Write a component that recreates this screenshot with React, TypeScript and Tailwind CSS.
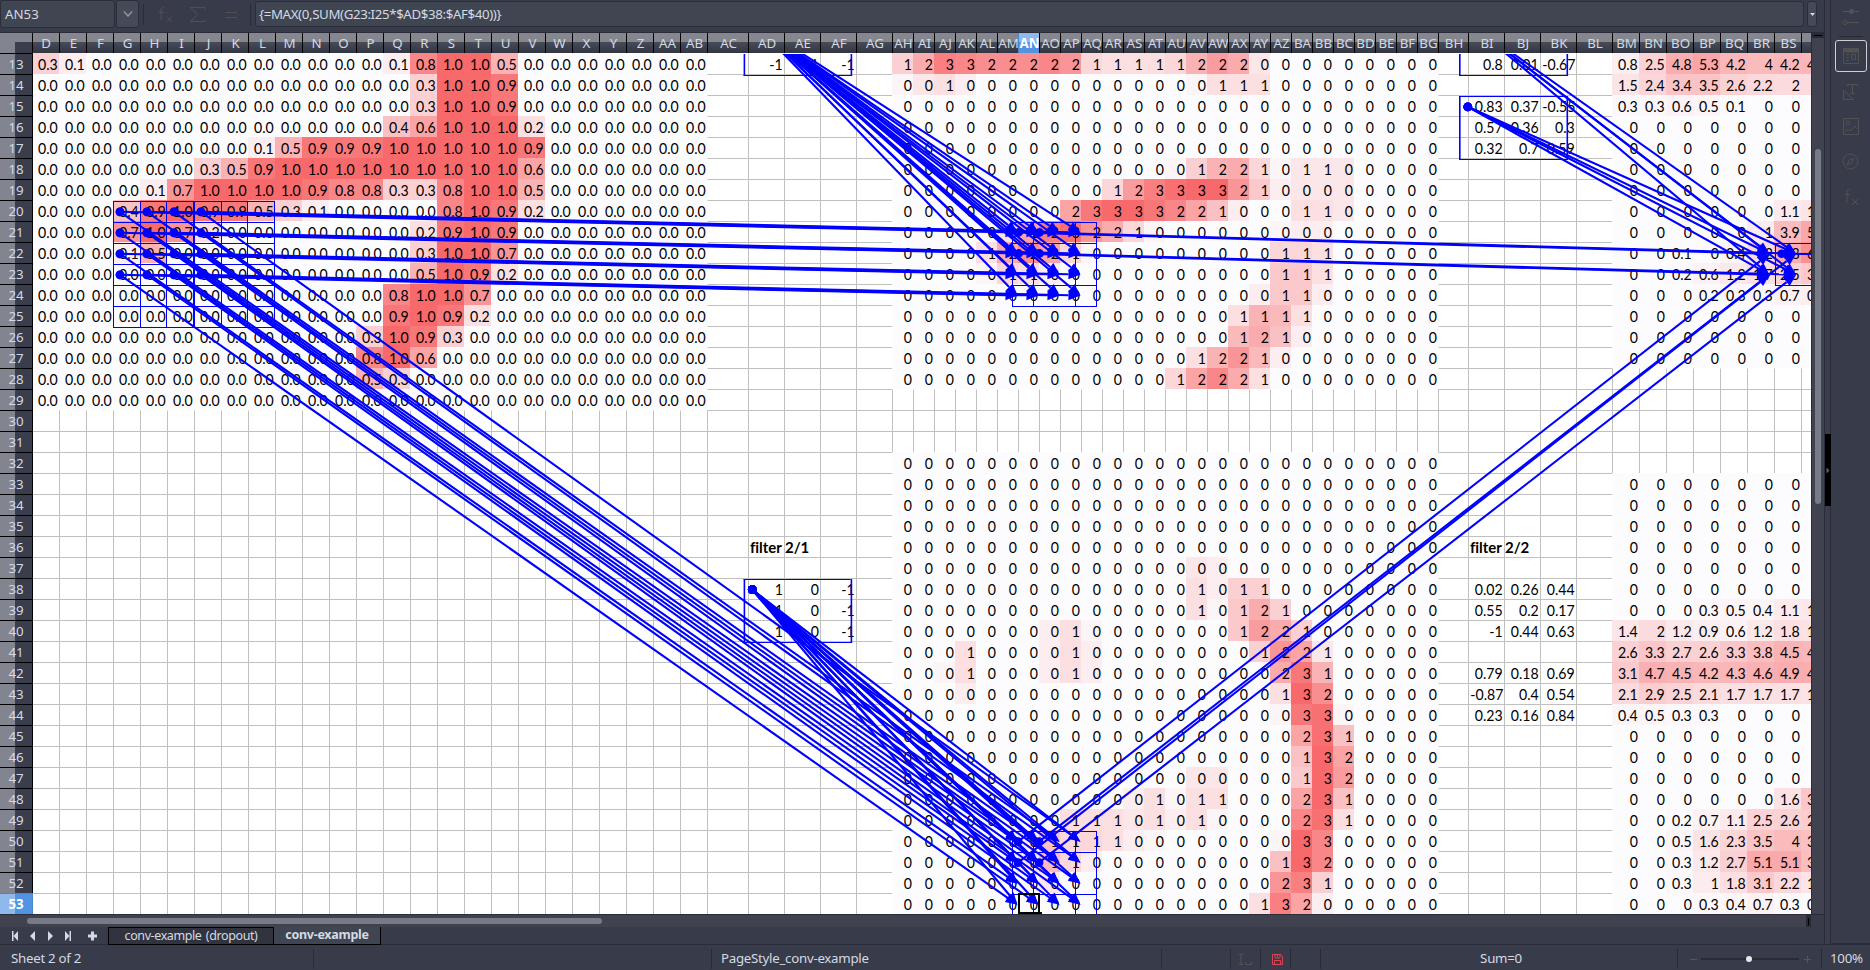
import React from "react";

const UI = "font-['Noto_Sans',sans-serif]";
const FIRST_ROW = 13;
const LAST_ROW = 53;

type Col = { name: string; w: number };

function colName(n: number): string {
  let s = "";
  let k = n;
  while (k > 0) {
    s = String.fromCharCode(65 + ((k - 1) % 26)) + s;
    k = Math.floor((k - 1) / 26);
  }
  return s;
}

function colNumber(name: string): number {
  return name.split("").reduce((n, c) => n * 26 + c.charCodeAt(0) - 64, 0);
}

const D = 4;
const AC = colNumber("AC");
const AH = colNumber("AH");
const BH = colNumber("BH");
const BM = colNumber("BM");
const BT = colNumber("BT");

const cols: Col[] = [];
for (let n = D; n <= BT; n++) {
  let w = 27;
  if (n === AC) w = 41;
  else if (n > AC && n < AH) w = 36;
  else if (n >= AH && n < BH) w = 21;
  else if (n === BH) w = 30;
  else if (n > BH && n < BM) w = 36;
  else if (n === BT) w = 10;
  cols.push({ name: colName(n), w });
}

/* Non-zero pixels of the input image, in tenths. */
const imageCells: Record<number, Record<string, number>> = {
  13: { D: 3, E: 1, Q: 1, R: 8, S: 10, T: 10, U: 5 },
  14: { R: 3, S: 10, T: 10, U: 9 },
  15: { R: 3, S: 10, T: 10, U: 9 },
  16: { Q: 4, R: 6, S: 10, T: 10, U: 10, V: 2 },
  17: { L: 1, M: 5, N: 9, O: 9, P: 9, Q: 10, R: 10, S: 10, T: 10, U: 10, V: 9 },
  18: { J: 3, K: 5, L: 9, M: 10, N: 10, O: 10, P: 10, Q: 10, R: 10, S: 10, T: 10, U: 10, V: 6 },
  19: { H: 1, I: 7, J: 10, K: 10, L: 10, M: 10, N: 9, O: 8, P: 8, Q: 3, R: 3, S: 8, T: 10, U: 10, V: 5 },
  20: { G: 4, H: 9, I: 10, J: 9, K: 9, L: 5, M: 3, N: 1, S: 8, T: 10, U: 9, V: 2 },
  21: { G: 7, H: 10, I: 7, J: 2, R: 2, S: 9, T: 10, U: 9 },
  22: { G: 1, H: 5, R: 3, S: 10, T: 10, U: 7 },
  23: { R: 5, S: 10, T: 9, U: 2 },
  24: { Q: 8, R: 10, S: 10, T: 7 },
  25: { Q: 9, R: 10, S: 9, T: 2 },
  26: { P: 3, Q: 10, R: 9, S: 3 },
  27: { P: 8, Q: 10, R: 6 },
  28: { P: 5, Q: 3 },
};

/* Sparse feature map rows: "column:digit:heat", heat in twentieths. */
const maps: Record<number, string> = {
  13: "AH:1:6 AI:2:11 AJ:3:17 AK:3:16 AL:2:15 AM:2:15 AN:2:15 AO:2:16 AP:2:14 AQ:1:5 AR:1:4 AS:1:4 AT:1:4 AU:1:5 AV:2:10 AW:2:13 AX:2:11 AY:0:3",
  14: "AH:0:1 AI:0:3 AJ:1:4 AK:0:2 AV:0:1 AW:1:4 AX:1:4 AY:1:4",
  18: "AU:0:1 AV:1:6 AW:2:10 AX:2:11 AY:1:5 AZ:0:1 BA:1:3 BB:1:3 BC:0:3",
  19: "AR:1:5 AS:2:13 AT:3:17 AU:3:19 AV:3:20 AW:3:20 AX:2:14 AY:1:7 AZ:0:2 BA:0:3 BB:0:3 BC:0:3",
  20: "AP:2:12 AQ:3:18 AR:3:20 AS:3:20 AT:3:18 AU:2:16 AV:2:12 AW:1:8 AX:0:2 BA:1:4 BB:1:4 BC:0:3",
  21: "AM:0:4 AN:1:12 AO:2:17 AP:3:19 AQ:2:14 AR:2:11 AS:1:5 AT:0:1 AZ:0:1 BA:0:2 BB:0:2",
  22: "AL:1:4 AM:2:11 AN:2:15 AO:2:12 AP:1:5 AQ:0:1 AZ:1:5 BA:1:5 BB:1:4",
  23: "AL:0:1 AM:1:5 AN:1:4 AO:0:2 AP:0:0 AZ:1:7 BA:1:7 BB:1:4",
  24: "AY:0:2 AZ:1:7 BA:1:7 BB:0:2",
  25: "AX:1:4 AY:1:10 AZ:1:9 BA:1:4",
  26: "AX:1:9 AY:2:11 AZ:1:8 BA:0:2",
  27: "AV:1:4 AW:2:10 AX:2:14 AY:1:9 AZ:0:2",
  28: "AU:1:5 AV:2:12 AW:2:16 AX:2:11 AY:1:4",
  37: "AV:0:3 AW:0:2",
  38: "AV:1:4 AW:0:2 AX:1:6 AY:1:6",
  39: "AV:1:4 AW:0:1 AX:1:7 AY:2:11 AZ:1:6",
  40: "AO:0:2 AP:1:4 AQ:0:1 AX:1:7 AY:2:13 AZ:2:11 BA:1:6",
  41: "AK:1:4 AO:0:2 AP:1:4 AQ:0:2 AY:1:6 AZ:2:14 BA:2:12 BB:1:3",
  42: "AJ:0:1 AK:1:4 AO:0:2 AP:1:4 AQ:0:2 AZ:2:11 BA:3:18 BB:1:10",
  43: "AK:0:2 AZ:1:4 BA:3:20 BB:2:15",
  44: "AZ:0:1 BA:3:18 BB:3:19 BC:0:1",
  45: "BA:2:12 BB:3:19 BC:1:8",
  46: "BA:1:8 BB:3:20 BC:2:12",
  47: "AV:0:3 AW:0:3 BA:1:7 BB:3:20 BC:2:13",
  48: "AS:0:2 AT:1:4 AU:0:1 AV:1:4 AW:1:4 BA:2:12 BB:3:20 BC:1:8",
  49: "AP:1:4 AQ:1:4 AR:1:4 AS:0:3 AT:1:4 AU:0:2 AV:1:4 AW:0:1 BA:2:16 BB:3:19 BC:1:4",
  50: "AN:0:2 AO:1:8 AP:1:5 AQ:1:5 AR:1:4 AS:0:2 AT:0:1 AZ:0:1 BA:3:20 BB:3:16",
  51: "AN:0:3 AO:1:9 AP:1:5 AQ:0:2 AZ:1:8 BA:3:20 BB:2:16",
  52: "AO:0:3 AZ:2:14 BA:3:17 BB:1:6",
  53: "AY:1:4 AZ:3:17 BA:2:12 BB:0:2",
};

const output: Record<number, string> = {
  13: "0.8 2.5 4.8 5.3 4.2 4 4.2 4.3",
  14: "1.5 2.4 3.4 3.5 2.6 2.2 2 2",
  15: "0.3 0.3 0.6 0.5 0.1 0 0 0",
  20: "0 0 0 0 0 0 1.1 1.4",
  21: "0 0 0 0 0 1 3.9 5.2",
  22: "0 0 0.1 0 0.4 2 4.8 6.6",
  23: "0 0 0.2 0.6 1.2 1.7 2.5 3.1",
  24: "0 0 0 0.2 0.3 0.3 0.7 0.8",
  39: "0 0 0 0.3 0.5 0.4 1.1 1.2",
  40: "1.4 2 1.2 0.9 0.6 1.2 1.8 1.6",
  41: "2.6 3.3 2.7 2.6 3.3 3.8 4.5 4.2",
  42: "3.1 4.7 4.5 4.2 4.3 4.6 4.9 4.8",
  43: "2.1 2.9 2.5 2.1 1.7 1.7 1.7 1.6",
  44: "0.4 0.5 0.3 0.3 0 0 0 0",
  48: "0 0 0 0 0 0 1.6 3.3",
  49: "0 0 0.2 0.7 1.1 2.5 2.6 2.9",
  50: "0 0 0.5 1.6 2.3 3.5 4 3.7",
  51: "0 0 0.3 1.2 2.7 5.1 5.1 3.8",
  52: "0 0 0.3 1 1.8 3.1 2.2 1.4",
  53: "0 0 0 0.3 0.4 0.7 0.3 0.2",
};

const filters: Record<number, Record<string, string>> = {
  13: { AD: "-1", AE: "-1", AF: "-1", BI: "0.8", BJ: "0.01", BK: "-0.67" },
  15: { BI: "0.83", BJ: "0.37", BK: "-0.55" },
  16: { BI: "0.57", BJ: "0.36", BK: "0.3" },
  17: { BI: "0.32", BJ: "0.7", BK: "0.59" },
  38: { AD: "1", AE: "0", AF: "-1", BI: "0.02", BJ: "0.26", BK: "0.44" },
  39: { AD: "1", AE: "0", AF: "-1", BI: "0.55", BJ: "0.2", BK: "0.17" },
  40: { AD: "1", AE: "0", AF: "-1", BI: "-1", BJ: "0.44", BK: "0.63" },
  42: { BI: "0.79", BJ: "0.18", BK: "0.69" },
  43: { BI: "-0.87", BJ: "0.4", BK: "0.54" },
  44: { BI: "0.23", BJ: "0.16", BK: "0.84" },
};

function heat(t: number): string {
  const f = Math.min(1, Math.max(0, t));
  const mix = (a: number, b: number) => Math.round(a + (b - a) * f);
  return `rgb(${mix(252, 248)},${mix(252, 105)},${mix(255, 107)})`;
}

type CellData = { text?: string; bg?: string; label?: boolean };

function cellAt(row: number, i: number): CellData {
  const n = D + i;
  const name = cols[i].name;
  if (n < AC && row <= 29) {
    const v = (imageCells[row]?.[name] ?? 0) / 10;
    return { text: v.toFixed(1), bg: heat(v) };
  }
  if (n >= AH && n < BH && (row <= 28 || row >= 32)) {
    const hit = (maps[row] ?? "").split(" ").find((t) => t.startsWith(name + ":"));
    if (!hit) return { text: "0", bg: heat(0) };
    const [, text, level] = hit.split(":");
    return { text, bg: heat(Number(level) / 20) };
  }
  if (n >= BM && (row <= 27 || row >= 33)) {
    const text = (output[row] ?? "").split(" ")[n - BM] || "0";
    /* Single digits of the last, partly scrolled column lie beyond the edge. */
    const hidden = n === BT && text.length === 1;
    return { text: hidden ? "" : text, bg: heat(Number(text) / 9) };
  }
  if (row === 36 && name === "AD") return { text: "filter 2/1", label: true };
  if (row === 36 && name === "BI") return { text: "filter 2/2", label: true };
  return { text: filters[row]?.[name] };
}

function Num({ children }: { children?: string }) {
  if (!children) return null;
  return <span className="inline-block origin-right scale-x-[0.91] whitespace-nowrap [font-kerning:none]">{children}</span>;
}

function Cell({ row, i }: { row: number; i: number }) {
  const { text, bg, label } = cellAt(row, i);
  const { w, name } = cols[i];
  const n = D + i;
  if (bg) {
    return (
      <div className="h-[21px] shrink-0 overflow-hidden" style={{ width: w, backgroundColor: bg }}>
        <div className="flex justify-end pr-px pt-px leading-[21px]" style={{ width: n === BT ? 27 : w }}>
          <Num>{text}</Num>
        </div>
      </div>
    );
  }
  const above = row > FIRST_ROW && cellAt(row - 1, i).bg;
  const left = (name === "AC" && row <= 29) || (name === "BH" && (row <= 28 || row >= 32));
  return (
    <div
      className={`flex h-[21px] shrink-0 whitespace-nowrap border-l border-t leading-[21px] ${
        above || row === FIRST_ROW ? "border-t-transparent" : "border-t-[#c0c0c0]"
      } ${left ? "border-l-[#fcfcff]" : "border-l-[#c0c0c0]"} ${
        label ? "justify-start pl-px text-[15px] font-bold tracking-[-0.05px]" : "justify-end pr-px"
      }`}
      style={{ width: w }}
    >
      {label ? text : <Num>{text}</Num>}
    </div>
  );
}

function HeaderRow() {
  return (
    <div className="flex h-[20px] shrink-0 border-b border-black">
      <div className="flex h-[20px] w-[33px] shrink-0 flex-col items-end border-r border-black bg-[#82858f] pt-[9px]">
        <div className="h-[11px] w-[17px] bg-[#3a3d4b]" />
      </div>
      {cols.map((c, i) => {
        const sel = c.name === "AN";
        const w = i === 0 ? c.w - 1 : c.w;
        return (
          <div
            key={c.name}
            className={`h-[20px] shrink-0 overflow-hidden text-center text-[13.3px] leading-[21px] ${UI} ${
              i === 0 ? "" : sel ? "border-l border-[#4a86cf]" : "border-l border-black"
            } ${
              sel
                ? "bg-[linear-gradient(#8fb8ed_0,#8fb8ed_9px,#5294e2_9px)] font-bold text-white"
                : "bg-[linear-gradient(#85868e_0,#85868e_9px,#484b58_9px,#323542)] text-[#d3dae3]"
            }`}
            style={{ width: w }}
          >
            <div className="flex justify-center" style={{ width: w }}>
              <span>{c.name === "BT" ? "" : c.name}</span>
            </div>
          </div>
        );
      })}
    </div>
  );
}

type P = [number, number];

function Arrow({ from, to }: { from: P; to: P }) {
  const dx = to[0] - from[0];
  const dy = to[1] - from[1];
  const len = Math.hypot(dx, dy);
  const ux = dx / len;
  const uy = dy / len;
  const bx = to[0] - ux * 12;
  const by = to[1] - uy * 12;
  return (
    <g>
      <line x1={from[0]} y1={from[1]} x2={bx} y2={by} stroke="#0000ff" strokeWidth={2.1} />
      <polygon
        points={`${to[0]},${to[1]} ${bx - uy * 5},${by + ux * 5} ${bx + uy * 5},${by - ux * 5}`}
        fill="#0000ff"
      />
      <circle cx={from[0]} cy={from[1]} r={4.4} fill="#0000ff" />
    </g>
  );
}

function Box({ x, y, w, h, thick }: { x: number; y: number; w: number; h: number; thick?: boolean }) {
  return (
    <g fill="#0000ff">
      <rect x={x} y={y} width={w} height={1} />
      <rect x={x} y={y + h} width={w + 1} height={1} />
      <rect x={x} y={y} width={thick ? 1.6 : 1} height={h + 1} />
      <rect x={x + w} y={y} width={thick ? 1.6 : 1} height={h + 1} />
    </g>
  );
}

/* Precedent tracing in window coordinates; the sheet's cells begin at y = 53. */
function Detective() {
  const four = [0, 1, 2, 3];
  const two = [0, 1];
  const arrows: { from: P; to: P }[] = [];
  const boxes: React.ReactNode[] = [];
  for (const i of four)
    for (const j of four) {
      const src: P = [120 + 27 * i, 211.8 + 21 * j];
      const a: P = [1017.5 + 21 * i, 232.6 + 21 * j];
      const b: P = [1017.5 + 21 * i, 841.7 + 21 * j];
      arrows.push({ from: src, to: a }, { from: src, to: b });
      arrows.push({ from: [752.3, 21.5], to: a }, { from: [752.3, 589.7], to: b });
      boxes.push(<Box key={`s${i}${j}`} x={113 + 27 * i - (i > 1 ? 1 : 0)} y={201 + 21 * j} w={81} h={63} />);
    }
  for (const i of two)
    for (const j of two) {
      const t: P = [1769.5 + 26.6 * i, 253.7 + 21 * j];
      arrows.push({ from: [1018.5 + 21 * i, 232.5 + 21 * j], to: t });
      arrows.push({ from: [1018 + 21 * i, 841.7 + 21 * j], to: t });
      arrows.push({ from: [1467.8, 21.5], to: t }, { from: [1467.8, 106.8], to: t });
      boxes.push(<Box key={`a${i}${j}`} x={1012 + 21 * i} y={222 + 21 * j} w={63} h={63} />);
      boxes.push(<Box key={`b${i}${j}`} x={1012 + 21 * i} y={831 + 21 * j} w={63} h={63} />);
    }
  return (
    <svg className="pointer-events-none absolute left-0 top-[54px]" width={1811} height={860} viewBox="0 54 1811 860">
      {boxes}
      <Box x={743.6} y={12} w={107} h={63} thick />
      <Box x={743.6} y={579} w={107} h={63} thick />
      <Box x={1459} y={12} w={107.5} h={63} thick />
      <Box x={1459} y={96} w={107.5} h={63} thick />
      <Box x={1775} y={243} w={60} h={42} />
      {arrows.map((a, k) => (
        <Arrow key={k} from={a.from} to={a.to} />
      ))}
      <circle cx={1781.5} cy={253.7} r={4.2} fill="#0000ff" />
      <line x1={1781} y1={253.7} x2={1811} y2={254} stroke="#0000ff" strokeWidth={2} />
      <rect x={1019} y={894} width={20} height={19} fill="none" stroke="#000" strokeWidth={2} />
      <rect x={1037} y={912} width={5} height={2} fill="#000" />
    </svg>
  );
}

function Sidebar() {
  return (
    <div className="flex h-[944px] w-[46px] shrink-0">
      <div className="flex w-[7px] flex-col items-center justify-start border-x border-[#2a2d39] bg-[#3a3d4b] pt-[434px]">
        <div className="flex h-[72px] w-[6px] items-center justify-center bg-black">
          <svg width="4" height="7" viewBox="0 0 4 7"><path d="M0.5 0.5 3.5 3.5 0.5 6.5Z" fill="#5c616e" /></svg>
        </div>
      </div>
      <div className="flex w-[39px] flex-col items-center border-b border-[#2a2d39] bg-[#383b49] text-[#525154]">
        <svg className="mt-[8px]" width="18" height="18" viewBox="0 0 18 18" fill="none" stroke="currentColor">
          <path d="M1 3.5h16M5 14.5h12" />
          <circle cx="9.5" cy="3.5" r="2.2" fill="currentColor" />
          <circle cx="3" cy="14.5" r="2" />
        </svg>
        <div className="mt-[10px] h-px w-[24px] bg-[#272a35]" />
        <div className="mt-[3px] flex h-[32px] w-[32px] items-center justify-center rounded-[3px] border border-[#d0d0d0]">
          <svg width="16" height="16" viewBox="0 0 16 16" fill="none" stroke="currentColor">
            <path d="M.5.5h15v15H.5z" />
            <path d="M0 0h16v4H0z" fill="currentColor" />
            <path d="M3 6.500h3M3 9.500h3M3 12.500h3M8.500 6.500h4v5h-4z" />
          </svg>
        </div>
        <svg className="mt-[11px]" width="16" height="17" viewBox="0 0 16 17" fill="none" stroke="currentColor">
          <path d="M4.500 3V1.500h10V3M9.500 1.500v9M7.500 10.500h4M.5 7.500v9h10z" />
        </svg>
        <svg className="mt-[18px]" width="16" height="17" viewBox="0 0 16 17" fill="none" stroke="currentColor">
          <path d="M.5.5h15v16H.5zM2 14l3-3 2 2 5-5 2 3" />
          <circle cx="5" cy="5" r="2" />
        </svg>
        <svg className="mt-[18px]" width="17" height="17" viewBox="0 0 17 17" fill="none" stroke="currentColor">
          <circle cx="8.500" cy="8.500" r="7.500" />
          <path d="M12 5 9.800 9.800 5 12l2.200-4.800z" />
        </svg>
        <svg className="mt-[18px]" width="16" height="18" viewBox="0 0 16 18" fill="none" stroke="currentColor">
          <path d="M7 1.500C4.500 1 4 2 4 4v11M1.500 6.500h5M9 11l6 6M15 11l-6 6" />
        </svg>
      </div>
    </div>
  );
}

function Sep() {
  return <div className="h-[20px] w-px shrink-0 bg-[#282b36]" />;
}

export default function App() {
  const rows: number[] = [];
  for (let r = FIRST_ROW; r <= LAST_ROW; r++) rows.push(r);

  return (
    <div className={`flex h-[970px] w-[1870px] flex-col overflow-hidden bg-[#383b49] text-[13.3px] text-[#d3dae3] ${UI}`}>
      <div className="flex h-[944px] shrink-0">
        <div className="relative flex w-[1824px] shrink-0 flex-col">
          <div className="flex h-[33px] shrink-0 items-start border-b border-[#2a2d39]">
            <div className="flex h-[28px] w-[115px] items-center rounded-[3px] border border-[#2b2e39] bg-[#404552] pl-1 pt-px">AN53</div>
            <div className="ml-px flex h-[28px] w-[23px] items-center justify-center rounded-[3px] border border-[#2b2e39] bg-[#444a58]">
              <svg width="10" height="6" viewBox="0 0 10 6" fill="none" stroke="#8f949f" strokeWidth="1.500"><path d="M1 .5 5 5 9 .5" /></svg>
            </div>
            <div className="ml-[4px] mt-[4px] h-[21px] w-px bg-[#2a2d39]" />
            <svg className="ml-[14px] mt-[7px]" width="80" height="16" viewBox="0 0 80 16" fill="none" stroke="#505053">
              <path d="M6 .7C3.500.2 3 1.500 3 3v10M.5 5.500h6M8.500 10l5.500 5M14 10l-5.500 5M47 2.500V.5H32.500l7 7-7 7H47v-2M67 5.500h12M67 10.500h12" />
            </svg>
            <div className="ml-[12px] mt-[4px] h-[21px] w-px bg-[#2a2d39]" />
            <div className="ml-[4px] mt-px flex h-[26px] w-[1549px] items-center rounded-[3px] border border-[#2b2e39] bg-[#404552] pl-[3px] pt-px tracking-[-0.38px]">
              {"{=MAX(0,SUM(G23:I25*$AD$38:$AF$40))}"}
            </div>
            <div className="ml-[3px] mt-px flex h-[26px] w-[10px] items-center justify-center rounded-[3px] border border-[#2b2e39] bg-[#444a58]">
              <svg width="5" height="3" viewBox="0 0 5 3"><path d="M0 0h5L2.500 3z" fill="#d3dae3" /></svg>
            </div>
          </div>
          <div className="flex h-[881px] shrink-0">
            <div className="flex w-[1811px] shrink-0 flex-col overflow-hidden bg-white">
              <HeaderRow />
              {rows.map((r) => {
                const sel = r === 53;
                return (
                  <div key={r} className="flex h-[21px] shrink-0 font-[Lato,sans-serif] text-[15.5px] text-black">
                    <div
                      className={`z-10 -mr-px flex h-[21px] w-[33px] shrink-0 items-center justify-center border-r border-t pt-px text-[13.3px] ${UI} ${
                        sel
                          ? "border-[#4a86cf] bg-[linear-gradient(90deg,#8fb8ed_15px,#5294e2_15px)] font-bold text-white"
                          : "border-black bg-[linear-gradient(90deg,#82858f_15px,#3a3d4b_15px)] text-[#d3dae3]"
                      }`}
                    >
                      {r}
                    </div>
                    {cols.map((c, i) => (
                      <Cell key={c.name} row={r} i={i} />
                    ))}
                  </div>
                );
              })}
            </div>
            <div className="flex w-[13px] flex-col items-center border-l border-[#2a2d39] bg-[#40434f]">
              <div className="h-[5px] w-[12px] bg-[#282a35] pt-[2px]"><div className="mx-auto h-px w-[8px] bg-black" /></div>
              <div className="mr-px mt-[111px] h-[355px] w-[6px] rounded-full bg-[#767b87]" />
            </div>
          </div>
          <div className="flex h-[13px] shrink-0 items-center border-t border-[#2a2d39]">
            <div className="flex h-full w-[1811px] items-center justify-between bg-[#40434f] pl-[27px]">
              <div className="h-[6px] w-[575px] rounded-full bg-[#767b87]" />
              <div className="flex h-[12px] w-[5px] justify-center bg-[#282a35]"><div className="mt-[3px] h-[7px] w-px bg-black" /></div>
            </div>
          </div>
          <div className="flex h-[18px] shrink-0 items-center">
            <svg className="ml-[11px] shrink-0" width="88" height="12" viewBox="0 0 88 12" fill="#d3dae3">
              <path d="M1 1h1.500v10H1zM7 1v10L2.500 6zM24 1v10l-5-5zM37 1v10l5-5zM54 1v10l4.500-5zM58.500 1H60v10h-1.500zM80 1.500h3v3h3v3h-3v3h-3v-3h-3v-3h3z" />
            </svg>
            <div className="ml-[9px] flex h-[18px] w-[166px] items-center justify-center border border-black bg-[#31343f] text-[12.5px] tracking-[-0.4px] [word-spacing:1.5px]">conv-example (dropout)</div>
            <div className="flex h-[18px] w-[107px] items-center justify-center border-b border-r border-black bg-[#404552] text-[12.5px] font-bold tracking-[-0.27px]">conv-example</div>
          </div>
          <Detective />
        </div>
        <Sidebar />
      </div>
      <div className="flex h-[26px] shrink-0 items-center border-t border-[#2a2d39] pt-[3px] tracking-[-0.28px]">
        <div className="w-[313px] pl-[11px]">Sheet 2 of 2</div>
        <Sep />
        <div className="w-[397px]" />
        <Sep />
        <div className="w-[449px] pl-[9px]">PageStyle_conv-example</div>
        <Sep />
        <div className="w-[68px]" />
        <Sep />
        <div className="flex w-[29px] justify-center">
          <svg width="15" height="11" viewBox="0 0 15 11" fill="none" stroke="#55524f"><path d="M1 .5h4M3 .5v10M1 10.500h4M7.500 8v2.500h6V8" /></svg>
        </div>
        <Sep />
        <div className="flex w-[29px] justify-center pl-[3px]">
          <svg width="11" height="11" viewBox="0 0 11 11" fill="none" stroke="#da4453"><path d="M.5.5h8l2 2v8H.5zM3 .5v3.500h5V.5M2.500 10.500v-4h6v4M5.500 1v2" /></svg>
        </div>
        <Sep />
        <div className="w-[29px]" />
        <Sep />
        <div className="w-[356px] pl-[4px] text-center">Sum=0</div>
        <Sep />
        <div className="flex w-[143px] items-center pl-[12px]">
          <div className="h-px w-[7px] bg-[#55565c]" />
          <div className="ml-[4px] flex h-[2px] w-[98px] items-center bg-[#292c38]">
            <div className="ml-[45px] h-[6px] w-[6px] rounded-full bg-[#e8e8e8]" />
          </div>
          <svg className="ml-[5px]" width="7" height="7" viewBox="0 0 7 7" stroke="#55565c"><path d="M0 3.500h7M3.500 0v7" /></svg>
        </div>
        <Sep />
        <div className="pl-[8px]">100%</div>
      </div>
    </div>
  );
}
